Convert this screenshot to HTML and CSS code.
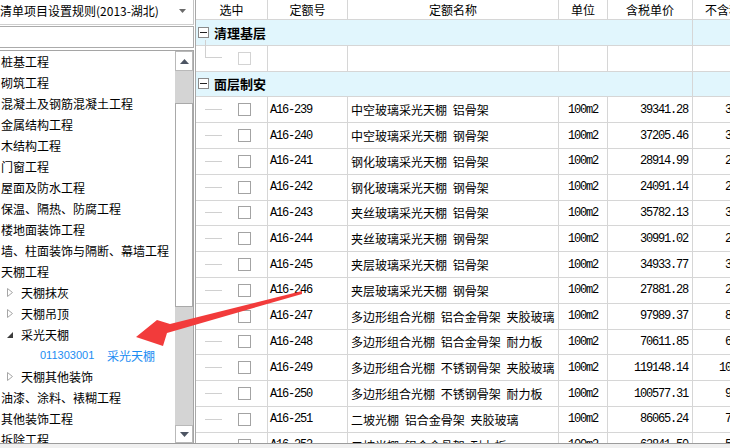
FILE: index.html
```html
<!DOCTYPE html>
<html lang="zh-CN">
<head>
<meta charset="utf-8">
<title>清单项目设置规则</title>
<link rel="stylesheet" href="styles.css">
</head>
<body>
<div class="app">
  <div class="main">
    <div class="left">
      <div class="combo">
        <span class="combo-text">清单项目设置规则(2013-湖北)</span>
        <svg class="combo-arrow" width="7" height="4" viewBox="0 0 7 4"><path d="M0 0H7L3.5 4Z" fill="#6a6a6a"/></svg>
      </div>
      <div class="search"></div>
      <div class="tree">
        <ul class="tree-list">
          <li class="lvl0">桩基工程</li>
          <li class="lvl0">砌筑工程</li>
          <li class="lvl0">混凝土及钢筋混凝土工程</li>
          <li class="lvl0">金属结构工程</li>
          <li class="lvl0">木结构工程</li>
          <li class="lvl0">门窗工程</li>
          <li class="lvl0">屋面及防水工程</li>
          <li class="lvl0">保温、隔热、防腐工程</li>
          <li class="lvl0">楼地面装饰工程</li>
          <li class="lvl0">墙、柱面装饰与隔断、幕墙工程</li>
          <li class="lvl0">天棚工程</li>
          <li class="lvl1"><span class="tri"><svg width="6" height="9" viewBox="0 0 6 9"><path d="M0.5 0.5V8.5L5.5 4.5Z" fill="#fff" stroke="#a6a6a6"/></svg></span>天棚抹灰</li>
          <li class="lvl1"><span class="tri"><svg width="6" height="9" viewBox="0 0 6 9"><path d="M0.5 0.5V8.5L5.5 4.5Z" fill="#fff" stroke="#a6a6a6"/></svg></span>天棚吊顶</li>
          <li class="lvl1"><span class="tri"><svg width="6" height="6" viewBox="0 0 6 6"><path d="M6 0V6H0Z" fill="#3c3c3c"/></svg></span>采光天棚</li>
          <li class="lvl2"><span class="code">011303001</span><span>采光天棚</span></li>
          <li class="lvl1"><span class="tri"><svg width="6" height="9" viewBox="0 0 6 9"><path d="M0.5 0.5V8.5L5.5 4.5Z" fill="#fff" stroke="#a6a6a6"/></svg></span>天棚其他装饰</li>
          <li class="lvl0">油漆、涂料、裱糊工程</li>
          <li class="lvl0">其他装饰工程</li>
          <li class="lvl0">拆除工程</li>
        </ul>
        <div class="vscroll">
          <div class="sb-btn"><svg width="9" height="5" viewBox="0 0 9 5"><path d="M0 5H9L4.5 0Z" fill="#4d5563"/></svg></div>
          <div class="sb-track top"></div>
          <div class="sb-thumb"></div>
          <div class="sb-track rest"></div>
          <div class="sb-btn"><svg width="9" height="5" viewBox="0 0 9 5"><path d="M0 0H9L4.5 5Z" fill="#4d5563"/></svg></div>
        </div>
      </div>
    </div>
    <div class="right">
      <div class="row head">
        <div class="cell c">选中</div>
        <div class="cell c">定额号</div>
        <div class="cell c">定额名称</div>
        <div class="cell c">单位</div>
        <div class="cell c">含税单价</div>
        <div class="cell c">不含税单价</div>
      </div>
      <div class="row group">
        <div class="cell gcell"><span class="minus"><span></span></span><b>清理基层</b></div>
        <div class="cell"></div>
      </div>
      <div class="row">
        <div class="cell sel"><span class="branch first"></span><span class="chk off"></span></div>
        <div class="cell"></div><div class="cell"></div><div class="cell"></div><div class="cell"></div><div class="cell"></div>
      </div>
      <div class="row group">
        <div class="cell gcell"><span class="minus"><span></span></span><b>面层制安</b></div>
        <div class="cell"></div>
      </div>
      <div class="row"><div class="cell sel"><span class="branch"></span><span class="chk"></span></div><div class="cell code">A16-239</div><div class="cell name">中空玻璃采光天棚 铝骨架</div><div class="cell unit">100m2</div><div class="cell num">39341.28</div><div class="cell num">35764.80</div></div>
      <div class="row"><div class="cell sel"><span class="branch"></span><span class="chk"></span></div><div class="cell code">A16-240</div><div class="cell name">中空玻璃采光天棚 钢骨架</div><div class="cell unit">100m2</div><div class="cell num">37205.46</div><div class="cell num">33823.15</div></div>
      <div class="row"><div class="cell sel"><span class="branch"></span><span class="chk"></span></div><div class="cell code">A16-241</div><div class="cell name">钢化玻璃采光天棚 铝骨架</div><div class="cell unit">100m2</div><div class="cell num">28914.99</div><div class="cell num">26286.35</div></div>
      <div class="row"><div class="cell sel"><span class="branch"></span><span class="chk"></span></div><div class="cell code">A16-242</div><div class="cell name">钢化玻璃采光天棚 钢骨架</div><div class="cell unit">100m2</div><div class="cell num">24091.14</div><div class="cell num">21901.04</div></div>
      <div class="row"><div class="cell sel"><span class="branch"></span><span class="chk"></span></div><div class="cell code">A16-243</div><div class="cell name">夹丝玻璃采光天棚 铝骨架</div><div class="cell unit">100m2</div><div class="cell num">35782.13</div><div class="cell num">32529.21</div></div>
      <div class="row"><div class="cell sel"><span class="branch"></span><span class="chk"></span></div><div class="cell code">A16-244</div><div class="cell name">夹丝玻璃采光天棚 钢骨架</div><div class="cell unit">100m2</div><div class="cell num">30991.02</div><div class="cell num">28173.65</div></div>
      <div class="row"><div class="cell sel"><span class="branch"></span><span class="chk"></span></div><div class="cell code">A16-245</div><div class="cell name">夹层玻璃采光天棚 铝骨架</div><div class="cell unit">100m2</div><div class="cell num">34933.77</div><div class="cell num">31757.97</div></div>
      <div class="row"><div class="cell sel"><span class="branch"></span><span class="chk"></span></div><div class="cell code">A16-246</div><div class="cell name">夹层玻璃采光天棚 钢骨架</div><div class="cell unit">100m2</div><div class="cell num">27881.28</div><div class="cell num">25346.62</div></div>
      <div class="row"><div class="cell sel"><span class="branch"></span><span class="chk"></span></div><div class="cell code">A16-247</div><div class="cell name">多边形组合光棚 铝合金骨架 夹胶玻璃</div><div class="cell unit">100m2</div><div class="cell num">97989.37</div><div class="cell num">89081.25</div></div>
      <div class="row"><div class="cell sel"><span class="branch"></span><span class="chk"></span></div><div class="cell code">A16-248</div><div class="cell name">多边形组合光棚 铝合金骨架 耐力板</div><div class="cell unit">100m2</div><div class="cell num">70611.85</div><div class="cell num">64192.59</div></div>
      <div class="row"><div class="cell sel"><span class="branch"></span><span class="chk"></span></div><div class="cell code">A16-249</div><div class="cell name">多边形组合光棚 不锈钢骨架 夹胶玻璃</div><div class="cell unit">100m2</div><div class="cell num">119148.14</div><div class="cell num">108316.49</div></div>
      <div class="row"><div class="cell sel"><span class="branch"></span><span class="chk"></span></div><div class="cell code">A16-250</div><div class="cell name">多边形组合光棚 不锈钢骨架 耐力板</div><div class="cell unit">100m2</div><div class="cell num">100577.31</div><div class="cell num">91433.92</div></div>
      <div class="row"><div class="cell sel"><span class="branch"></span><span class="chk"></span></div><div class="cell code">A16-251</div><div class="cell name">二坡光棚 铝合金骨架 夹胶玻璃</div><div class="cell unit">100m2</div><div class="cell num">86065.24</div><div class="cell num">78241.13</div></div>
      <div class="row"><div class="cell sel"><span class="branch"></span><span class="chk"></span></div><div class="cell code">A16-252</div><div class="cell name">二坡光棚 铝合金骨架 耐力板</div><div class="cell unit">100m2</div><div class="cell num">62841.50</div><div class="cell num">57128.64</div></div>
    </div>
  </div>
  <div class="statusbar"></div>
</div>
<svg class="arrow" width="730" height="448" viewBox="0 0 730 448">
  <polygon points="302,291 170,324 157,320 136,337 163,346 167,333 302,294" fill="#f23b3b"/>
</svg>
</body>
</html>
```

FILE: styles.css
```css
html, body {
  margin: 0;
  padding: 0;
}
body {
  width: 730px;
  height: 448px;
  overflow: hidden;
  position: relative;
  background: #ffffff;
  font-family: "Noto Sans CJK SC", "Liberation Sans", sans-serif;
  font-size: 12px;
  color: #000;
}
.app {
  display: flex;
  flex-direction: column;
  height: 448px;
}
.main {
  display: flex;
  height: 443px;
  overflow: hidden;
}
.statusbar {
  height: 4px;
  border-top: 1px solid #9c9c9c;
  background: #f0f0f0;
}

/* left panel */
.left {
  width: 194px;
  flex: none;
  display: flex;
  flex-direction: column;
}
.combo {
  height: 25px;
  box-sizing: border-box;
  border-bottom: 1px solid #cfcfcf;
  border-right: 1px solid #c4c4c4;
  display: flex;
  align-items: center;
  padding-bottom: 2px;
}
.combo-text {
  flex: 1;
  white-space: nowrap;
  overflow: hidden;
  line-height: 20px;
}
.combo-arrow {
  margin-right: 7px;
}
.search {
  margin-top: 1px;
  height: 22px;
  box-sizing: border-box;
  border: 1px solid #ababab;
  border-left: none;
}
.tree {
  margin-top: 2px;
  flex: 1;
  min-height: 0;
  border-top: 1px solid #a5a5a5;
  border-right: 1px solid #a5a5a5;
  display: flex;
  overflow: hidden;
}
.tree-list {
  flex: 1;
  min-width: 0;
  list-style: none;
  margin: 0;
  padding: 0;
  overflow: hidden;
}
.tree-list li {
  height: 21px;
  line-height: 21px;
  white-space: nowrap;
  display: flex;
  align-items: center;
  padding-left: 1px;
}
.tree-list li.lvl1 {
  padding-left: 7px;
}
.tri {
  width: 14px;
  display: flex;
  align-items: center;
}
.tree-list li.lvl2 {
  padding-left: 40px;
  color: #1b8cf2;
}
.lvl2 .code {
  width: 67px;
  font-family: "Liberation Sans", sans-serif;
  font-size: 11px;
}
.vscroll {
  width: 18px;
  flex: none;
  display: flex;
  flex-direction: column;
  background: #d4d4d4;
}
.sb-btn {
  height: 20px;
  flex: none;
  box-sizing: border-box;
  background: #ffffff;
  border: 1px solid #b9b9b9;
  display: flex;
  align-items: center;
  justify-content: center;
}
.sb-btn:last-child {
  height: 18px;
}
.sb-track.top {
  height: 32px;
  flex: none;
}
.sb-track.rest {
  flex: 1;
}
.sb-thumb {
  height: 204px;
  flex: none;
  box-sizing: border-box;
  background: #ffffff;
  border: 1px solid #a9a9a9;
}

/* right grid */
.right {
  flex: 1;
  min-width: 0;
  margin-left: 1px;
  border-left: 1px solid #a8a8a8;
  overflow: hidden;
}
.row {
  display: grid;
  grid-template-columns: 72px 80px 211px 49px 85px 85px;
  height: 25.8px;
}
.row.head {
  height: 20px;
}
.row.group {
  grid-template-columns: 497px 85px;
  background: #e1f6fd;
}
.cell {
  box-sizing: border-box;
  border-right: 1px solid #d6d6d6;
  border-bottom: 1px solid #d6d6d6;
  display: flex;
  align-items: center;
  white-space: nowrap;
  overflow: hidden;
  min-width: 0;
}
.cell.c {
  justify-content: center;
}
.gcell {
  padding-left: 2px;
  overflow: visible;
}
.gcell b {
  font-size: 13px;
  font-weight: bold;
  margin-left: 5px;
}
.minus {
  width: 11px;
  height: 11px;
  box-sizing: border-box;
  border: 1px solid #8a8a8a;
  background: #fff;
  display: flex;
  align-items: center;
  justify-content: center;
  position: relative;
}
.minus span {
  width: 7px;
  height: 1px;
  background: #222;
}
.sel {
  overflow: visible;
}
.branch {
  margin-left: 9px;
  width: 17px;
  height: 1px;
  background: #d0d0d0;
  flex: none;
}
.branch.first {
  align-self: flex-start;
  margin-top: -6px;
  height: 18px;
  width: 17px;
  box-sizing: border-box;
  background: transparent;
  border-left: 1px solid #d0d0d0;
  border-bottom: 1px solid #d0d0d0;
}
.chk {
  margin-left: 16px;
  width: 13px;
  height: 13px;
  box-sizing: border-box;
  border: 1px solid #a3a3a3;
  background: #fff;
  flex: none;
}
.chk.off {
  border-color: #d3d3d3;
}
.cell.code {
  padding-left: 2px;
  font-family: "Liberation Mono", monospace;
  font-size: 12px;
  letter-spacing: -1.2px;
}
.cell.name {
  padding-left: 3px;
  word-spacing: 3px;
}
.cell.unit {
  justify-content: center;
  font-family: "Liberation Mono", monospace;
  font-size: 12px;
  letter-spacing: -1.2px;
}
.cell.num {
  justify-content: flex-end;
  padding-right: 4px;
  font-family: "Liberation Mono", monospace;
  font-size: 12px;
  letter-spacing: -1.2px;
}

.arrow {
  position: absolute;
  left: 0;
  top: 0;
  pointer-events: none;
}
```
